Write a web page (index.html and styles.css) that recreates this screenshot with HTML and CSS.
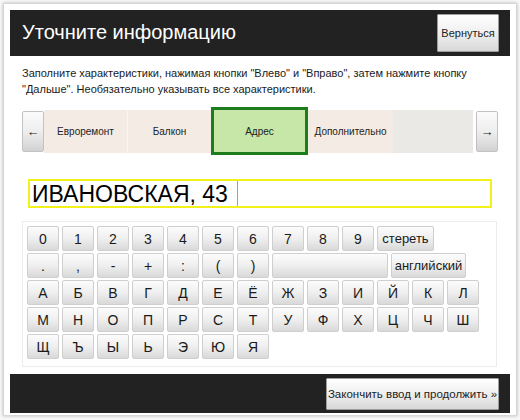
FILE: index.html
```html
<!DOCTYPE html>
<html lang="ru">
<head>
<meta charset="utf-8">
<link rel="stylesheet" href="styles.css">
</head>
<body>
<div class="frame">
  <header class="topbar">
    <h1 class="title">Уточните информацию</h1>
    <button class="btn back">Вернуться</button>
  </header>
  <p class="hint">Заполните характеристики, нажимая кнопки "Влево" и "Вправо", затем нажмите кнопку "Дальше". Необязательно указывать все характеристики.</p>
  <div class="nav">
    <button class="arrow">&larr;</button>
    <div class="tabs">
      <div class="tab t1">Евроремонт</div>
      <div class="tab t2">Балкон</div>
      <div class="tab active">Адрес</div>
      <div class="tab t4">Дополнительно</div>
      <div class="tab empty"></div>
    </div>
    <button class="arrow right">&rarr;</button>
  </div>
  <div class="field"><span class="value">ИВАНОВСКАЯ, 43</span><span class="caret"></span></div>
  <div class="keyboard">
    <div class="row">
      <span class="key">0</span><span class="key">1</span><span class="key">2</span><span class="key">3</span><span class="key">4</span><span class="key">5</span><span class="key">6</span><span class="key">7</span><span class="key">8</span><span class="key">9</span><span class="key erase">стереть</span>
    </div>
    <div class="row">
      <span class="key">.</span><span class="key">,</span><span class="key">-</span><span class="key">+</span><span class="key">:</span><span class="key">(</span><span class="key">)</span><span class="key space"></span><span class="key lang">английский</span>
    </div>
    <div class="row">
      <span class="key">А</span><span class="key">Б</span><span class="key">В</span><span class="key">Г</span><span class="key">Д</span><span class="key">Е</span><span class="key">Ё</span><span class="key">Ж</span><span class="key">З</span><span class="key">И</span><span class="key">Й</span><span class="key">К</span><span class="key">Л</span>
    </div>
    <div class="row">
      <span class="key">М</span><span class="key">Н</span><span class="key">О</span><span class="key">П</span><span class="key">Р</span><span class="key">С</span><span class="key">Т</span><span class="key">У</span><span class="key">Ф</span><span class="key">Х</span><span class="key">Ц</span><span class="key">Ч</span><span class="key">Ш</span>
    </div>
    <div class="row">
      <span class="key">Щ</span><span class="key">Ъ</span><span class="key">Ы</span><span class="key">Ь</span><span class="key">Э</span><span class="key">Ю</span><span class="key">Я</span>
    </div>
  </div>
  <footer class="bottombar">
    <button class="btn next">Закончить ввод и продолжить »</button>
  </footer>
</div>
</body>
</html>
```
FILE: styles.css
```css
* { box-sizing: border-box; }
html, body { margin: 0; padding: 0; background: #f7f7f7; }
body { font-family: "Liberation Sans", Arial, sans-serif; color: #222; }

.frame {
  margin: 3px;
  width: 514px;
  height: 413px;
  background: #fff;
  border: 1px solid #d6d6d6;
  box-shadow: 0 0 3px rgba(0,0,0,0.25);
  padding: 6px 6px 0 6px;
  display: flex;
  flex-direction: column;
}

.topbar {
  height: 46px;
  background: #222;
  display: flex;
  align-items: center;
  justify-content: space-between;
  padding: 0 11px 0 12px;
}
.title {
  margin: 0;
  color: #fff;
  font-weight: normal;
  font-size: 20px;
  margin-top: -1px;
}

.btn {
  font-family: "Liberation Sans", Arial, sans-serif;
  color: #222;
  background: linear-gradient(#ffffff, #f1f1f1 45%, #d8d8d8);
  border: 1px solid #9d9d9d;
  border-radius: 1px;
  padding: 0;
  white-space: nowrap;
  cursor: pointer;
}
.back { width: 62px; height: 38px; font-size: 11px; }

.hint {
  margin: 9px 0 0 12px;
  font-size: 11px;
  line-height: 16px;
  width: 470px;
  color: #1a1a1a;
}

.nav {
  margin: 10px 0 0 12px;
  height: 48px;
  display: flex;
  align-items: center;
}
.arrow {
  width: 22px;
  height: 41px;
  font-size: 13px;
  color: #222;
  background: linear-gradient(#fbfbfb, #eeeeee 50%, #d2d2d2);
  border: 1px solid #c2c2c2;
  border-radius: 2px;
  padding: 0;
}
.arrow.right { width: 22px; margin-left: 3px; }
.tabs { display: flex; align-items: center; height: 48px; }
.tab {
  height: 43px;
  display: flex;
  align-items: center;
  justify-content: center;
  font-size: 10px;
  color: #222;
  background: #f4ebe4;
}
.t1 { width: 84px; border-right: 1px solid #faf5f1; }
.t2 { width: 83px; }
.t4 { width: 85px; }
.tab.empty { width: 80px; background: #ebe9e6; }
.tab.active {
  width: 97px;
  height: 48px;
  background: #c6e7a8;
  border: 3px solid #1d7d1d;
}

.field {
  margin: 24px 0 0 18px;
  width: 464px;
  height: 29px;
  border: 2px solid #f2f21a;
  display: flex;
  align-items: center;
  padding-left: 2px;
}
.value { font-size: 23px; color: #000; line-height: 24px; }
.caret {
  width: 1px;
  height: 25px;
  background: #a0a0a0;
  margin-left: 9px;
}

.keyboard {
  margin: 13px 0 0 12px;
  width: 475px;
  height: 146px;
  border: 1px solid #ececec;
  padding: 4px 0 0 4px;
  display: flex;
  flex-direction: column;
  gap: 2px;
}
.row { display: flex; gap: 3px; }
.key {
  width: 32px;
  height: 25px;
  display: flex;
  align-items: center;
  justify-content: center;
  font-size: 14px;
  color: #1a1a1a;
  background: linear-gradient(#fcfcfc, #efefef 50%, #d9d9d9);
  border: 1px solid #cfcfcf;
  border-radius: 2px;
}
.key.erase { width: 57px; font-size: 13px; }
.key.space { width: 116px; }
.key.lang { width: 75px; font-size: 13px; }

.bottombar {
  margin-top: 7px;
  height: 39px;
  background: #222;
  display: flex;
  align-items: center;
  justify-content: flex-end;
  padding-right: 11px;
}
.next { width: 173px; height: 32px; font-size: 11.5px; }
```
